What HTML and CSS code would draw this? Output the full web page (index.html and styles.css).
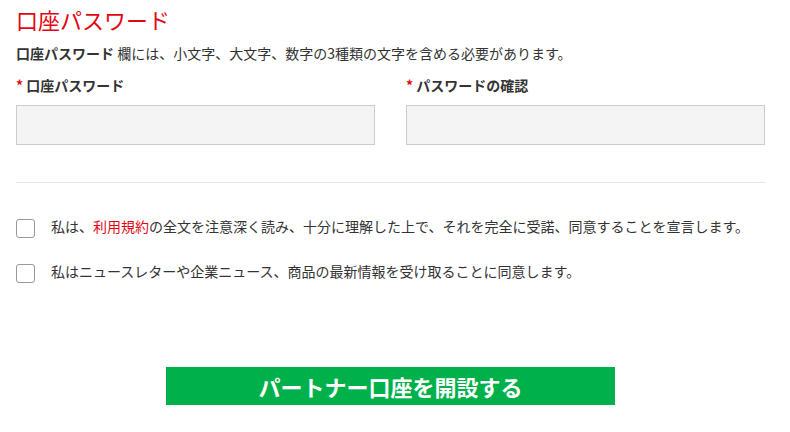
FILE: index.html
```html
<!DOCTYPE html>
<html lang="ja">
<head>
<meta charset="utf-8">
<link rel="stylesheet" href="styles.css">
</head>
<body>
<div class="page">
  <h2 class="title">口座パスワード</h2>
  <p class="desc"><b>口座パスワード</b> 欄には、小文字、大文字、数字の3種類の文字を含める必要があります。</p>
  <div class="fields">
    <div class="field">
      <label class="label"><span class="req">*</span> 口座パスワード</label>
      <input class="input" type="password">
    </div>
    <div class="field">
      <label class="label"><span class="req">*</span> パスワードの確認</label>
      <input class="input" type="password">
    </div>
  </div>
  <hr class="sep">
  <div class="check-row">
    <span class="box"></span>
    <span class="check-text">私は、<a class="link">利用規約</a>の全文を注意深く読み、十分に理解した上で、それを完全に受諾、同意することを宣言します。</span>
  </div>
  <div class="check-row">
    <span class="box"></span>
    <span class="check-text">私はニュースレターや企業ニュース、商品の最新情報を受け取ることに同意します。</span>
  </div>
  <div class="actions">
    <button class="submit">パートナー口座を開設する</button>
  </div>
</div>
</body>
</html>
```
FILE: styles.css
```css
html, body {
  margin: 0;
  padding: 0;
  background: #fff;
}
body {
  font-family: "Noto Sans CJK JP", "Noto Sans", sans-serif;
  color: #333;
}
.page {
  width: 749px;
  padding: 5px 0 0 16px;
}
.title {
  margin: 0;
  font-size: 22px;
  line-height: 29px;
  font-weight: 400;
  color: #e30613;
}
.desc {
  margin: 10px 0 0;
  font-size: 14px;
  line-height: 18px;
  color: #333;
}
.desc b {
  font-weight: 700;
}
.fields {
  display: grid;
  grid-template-columns: 1fr 1fr;
  column-gap: 31px;
  margin-top: 14px;
}
.field {
  display: flex;
  flex-direction: column;
}
.label {
  font-size: 14px;
  line-height: 18px;
  font-weight: 700;
  color: #333;
}
.req {
  color: #e30613;
}
.input {
  margin-top: 11px;
  height: 40px;
  box-sizing: border-box;
  background: #f4f4f4;
  border: 1px solid #ccc;
  border-radius: 0;
  padding: 0 8px;
  font: inherit;
}
.sep {
  margin: 37px 0 0;
  border: 0;
  border-top: 1px solid #e5e5e5;
  height: 0;
}
.check-row {
  display: flex;
  align-items: flex-start;
  margin-top: 36px;
}
.check-row + .check-row {
  margin-top: 26px;
}
.box {
  width: 19px;
  height: 19px;
  box-sizing: border-box;
  border: 1px solid #999;
  border-radius: 3px;
  flex: none;
}
.check-text {
  margin-left: 16px;
  font-size: 14px;
  line-height: 18px;
  color: #333;
  margin-top: -2px;
}
.link {
  color: #e30613;
  text-decoration: none;
}
.actions {
  display: flex;
  justify-content: center;
  margin-top: 84px;
}
.submit {
  width: 60%;
  height: 38px;
  border: 0;
  border-radius: 0;
  background: #00b04b;
  color: #fff;
  font-family: "Noto Sans CJK JP", "Noto Sans", sans-serif;
  font-size: 22px;
  font-weight: 700;
  line-height: 38px;
  padding: 0;
}
```
